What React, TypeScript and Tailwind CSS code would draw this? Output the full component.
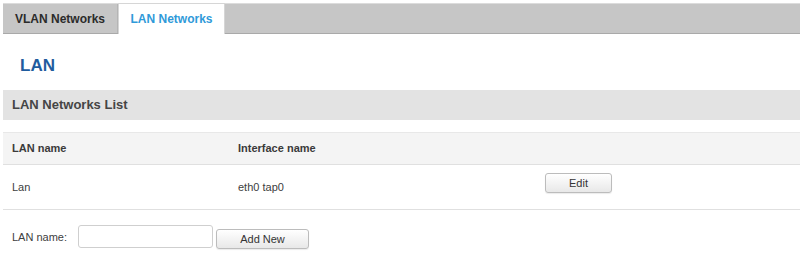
export default function App() {
  return (
    <div className="w-[800px] h-[255px] bg-white pt-[3px] pl-[3px] font-['Liberation_Sans',Arial,sans-serif] text-[#404040] overflow-hidden">
      {/* Tabs */}
      <div className="flex h-[31px] bg-[#c6c6c6] border-t border-[#dcdcdc] border-b border-b-[#a9a9a9]">
        <div className="w-[115px] flex items-center justify-center text-[12px] font-bold text-[#2b2b2b] border-r border-[#b5b5b5]">
          VLAN Networks
        </div>
        <div className="w-[107px] -mt-px -mb-px flex items-center justify-center bg-white border-x border-t border-[#d6d6d6] text-[12px] font-bold text-[#2f9ad9]">
          LAN Networks
        </div>
      </div>

      {/* Title */}
      <h1 className="mt-[22px] mb-[14px] pl-[17px] h-[20px] leading-[20px] text-[17px] font-bold text-[#1f5c9e]">
        LAN
      </h1>

      {/* Section header */}
      <div className="h-[30px] flex items-center pl-[9px] bg-[#e3e3e3] text-[13px] font-bold text-[#454545]">
        LAN Networks List
      </div>

      {/* Table */}
      <div className="mt-[12px]">
        <div className="grid grid-cols-[226px_307px_1fr] h-[33px] items-center bg-[#f4f4f4] border-t border-[#e8e8e8] border-b border-b-[#e0e0e0] text-[11px] font-bold text-[#3a3a3a]">
          <div className="pl-[9px]">LAN name</div>
          <div className="pl-[9px]">Interface name</div>
          <div />
        </div>
        <div className="grid grid-cols-[226px_307px_1fr] h-[45px] items-center border-b border-[#e0e0e0] text-[11px]">
          <div className="pl-[9px] pt-[1px]">Lan</div>
          <div className="pl-[9px] pt-[1px]">eth0 tap0</div>
          <div className="pl-[9px] self-start pt-[8px]">
            <button className="w-[67px] h-[20px] rounded-[3px] border border-[#bcbcbc] bg-gradient-to-b from-white to-[#e8e8e8] shadow-[0_1px_1px_rgba(0,0,0,0.08)] text-[11px] text-[#333]">
              Edit
            </button>
          </div>
        </div>
      </div>

      {/* Add form */}
      <div className="flex items-start pl-[9px] pt-[15px]">
        <label className="w-[66px] mt-[5px] text-[11px] leading-[14px]">LAN name:</label>
        <input
          type="text"
          className="w-[135px] h-[23px] rounded-[3px] border border-[#cfcfcf] bg-white outline-none"
        />
        <button className="ml-[3px] mt-[4px] w-[93px] h-[20px] rounded-[3px] border border-[#bcbcbc] bg-gradient-to-b from-white to-[#e8e8e8] shadow-[0_1px_1px_rgba(0,0,0,0.08)] text-[11px] text-[#333]">
          Add New
        </button>
      </div>
    </div>
  );
}
